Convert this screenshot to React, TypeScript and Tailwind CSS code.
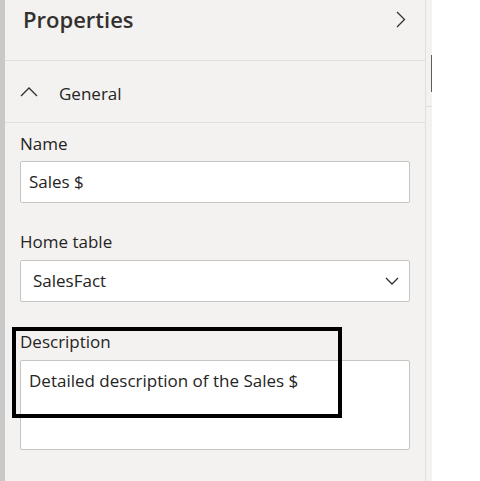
import React from "react";

export default function App() {
  const font = { fontFamily: '"Open Sans", "Noto Sans", sans-serif' };
  return (
    <div className="w-[480px] h-[481px] flex bg-white overflow-hidden" style={font}>
      <div className="w-[5px] bg-[#c8c8c8]" />
      <div className="w-[421px] bg-[#f3f2f1] border-r border-[#e1dfdd] flex flex-col">
        <div className="h-[61px] flex items-start justify-between pl-[18px] pr-[19px] border-b border-[#e1dfdd]">
          <span className="text-[22px] font-semibold text-[#323130] leading-none mt-[8px]">Properties</span>
          <svg width="10" height="17" viewBox="0 0 10 17" className="mt-[11px]">
            <path d="M1 1 L8.5 8.5 L1 16" fill="none" stroke="#323130" strokeWidth="1.3" />
          </svg>
        </div>
        <div className="h-[62px] flex items-start pl-[15px] border-b border-[#e1dfdd]">
          <svg width="18" height="10" viewBox="0 0 18 10" className="mt-[26px]">
            <path d="M1 9 L9 1 L17 9" fill="none" stroke="#323130" strokeWidth="1.3" />
          </svg>
          <span className="ml-[21px] mt-[21px] text-[17px] leading-[24px] text-[#252423]">General</span>
        </div>
        <div className="flex flex-col px-[15px]">
          <label className="mt-[9px] text-[17px] text-[#252423] leading-[24px]">Name</label>
          <div className="mt-[5px] h-[42px] bg-white border border-[#c8c6c4] rounded-[2px] flex items-center pl-[8px] text-[17px] leading-[24px] text-[#252423]">
            Sales $
          </div>
          <label className="mt-[27px] text-[17px] text-[#252423] leading-[24px]">Home table</label>
          <div className="mt-[6px] h-[42px] bg-white border border-[#c8c6c4] rounded-[2px] flex items-center justify-between pl-[12px] pr-[10px] text-[17px] leading-[24px] text-[#252423]">
            <span>SalesFact</span>
            <svg width="14" height="8" viewBox="0 0 14 8">
              <path d="M1 1 L7 7 L13 1" fill="none" stroke="#323130" strokeWidth="1.3" />
            </svg>
          </div>
          <div className="relative mt-[28px]">
            <label className="block text-[17px] text-[#252423] leading-[24px]">Description</label>
            <div className="mt-[6px] h-[90px] bg-white border border-[#c8c6c4] rounded-[2px] pl-[8px] pt-[8px] text-[17px] leading-[24px] text-[#252423]">
              Detailed description of the Sales $
            </div>
            <div className="absolute left-[-8px] top-[-3px] w-[330px] h-[91px] border-4 border-black" />
          </div>
        </div>
      </div>
      <div className="w-[6px] bg-[#f3f2f1] flex flex-col">
        <div className="h-[55px]" />
        <div className="h-[37px] w-[1px] ml-[5px] bg-[#605e5c]" />
        <div className="h-[14px]" />
        <div className="h-[1px] bg-[#e1dfdd]" />
      </div>
      <div className="flex-1 bg-white" />
    </div>
  );
}
